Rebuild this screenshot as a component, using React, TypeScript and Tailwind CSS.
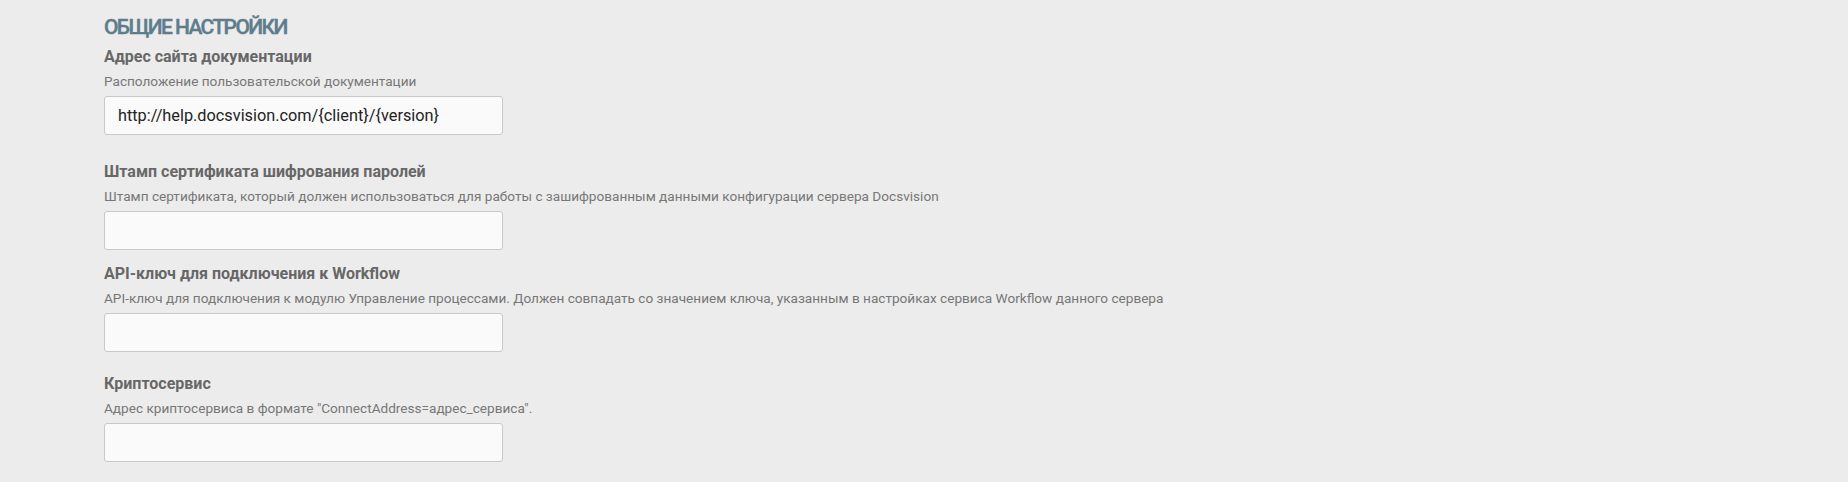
import React from 'react';

type Field = {
  label: string;
  hint: string;
  value?: string;
  gap: string;
};

const fields: Field[] = [
  {
    label: 'Адрес сайта документации',
    hint: 'Расположение пользовательской документации',
    value: 'http://help.docsvision.com/{client}/{version}',
    gap: 'mt-[7px]',
  },
  {
    label: 'Штамп сертификата шифрования паролей',
    hint: 'Штамп сертификата, который должен использоваться для работы с зашифрованным данными конфигурации сервера Docsvision',
    gap: 'mt-[28px]',
  },
  {
    label: 'API-ключ для подключения к Workflow',
    hint: 'API-ключ для подключения к модулю Управление процессами. Должен совпадать со значением ключа, указанным в настройках сервиса Workflow данного сервера',
    gap: 'mt-[15px]',
  },
  {
    label: 'Криптосервис',
    hint: 'Адрес криптосервиса в формате "ConnectAddress=адрес_сервиса".',
    gap: 'mt-[23px]',
  },
];

export default function App() {
  return (
    <div className="h-[482px] w-full overflow-hidden bg-[#ececec] pl-[104px] pt-[13px] font-['Roboto',sans-serif]">
      <h2 className="text-[21px] leading-[28px] font-medium tracking-[-1.6px] text-[#5e7d8c] [-webkit-text-stroke:0.4px_#5e7d8c]">
        ОБЩИЕ НАСТРОЙКИ
      </h2>

      {fields.map((f) => (
        <div key={f.label} className={f.gap}>
          <div className="text-[16px] leading-[18px] font-bold text-[#676767]">{f.label}</div>
          <div className="mt-[7px] text-[13.6px] leading-[16px] text-[#777777]">{f.hint}</div>
          <input
            type="text"
            defaultValue={f.value ?? ''}
            className="mt-[7px] block h-[39px] w-[399px] rounded-[3px] border border-[#c9c9c9] bg-[#fafafa] px-[13px] text-[16.3px] text-[#222222] outline-none"
          />
        </div>
      ))}
    </div>
  );
}
